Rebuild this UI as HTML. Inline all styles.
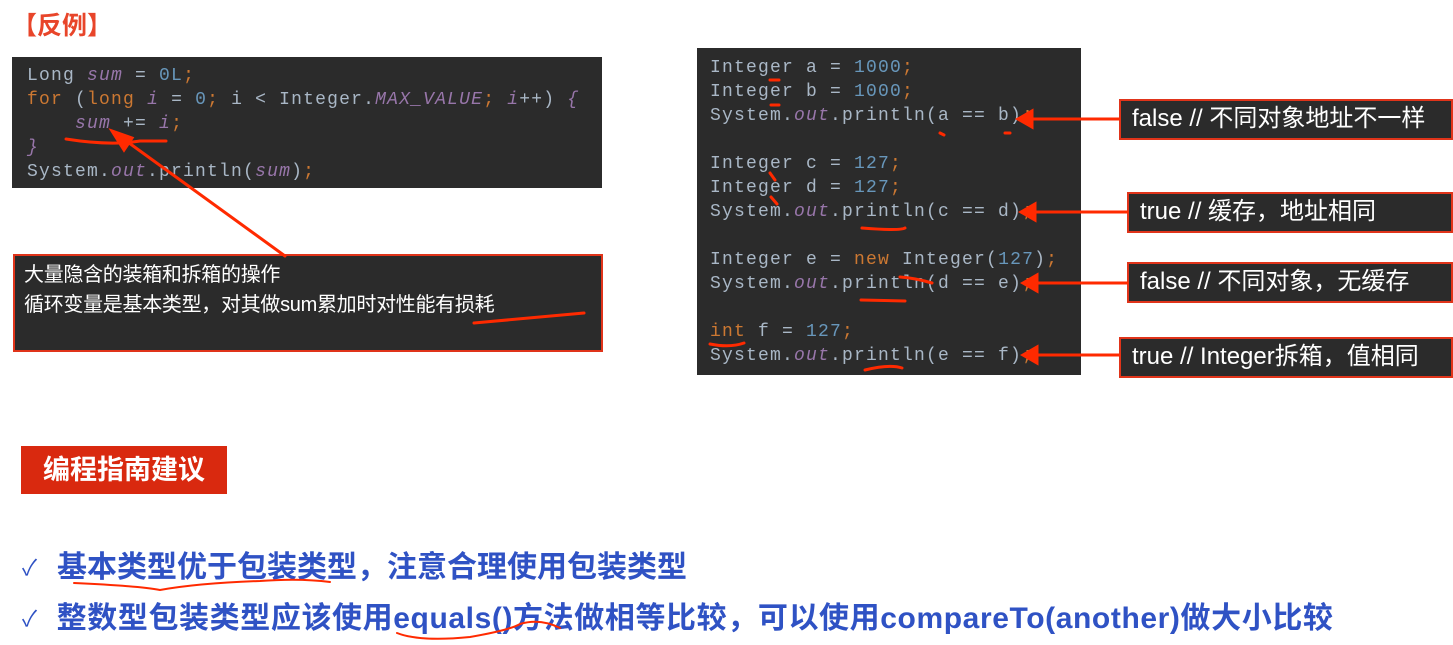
<!DOCTYPE html>
<html><head><meta charset="utf-8"><style>
body{margin:0;width:1453px;height:645px;background:#fff;position:relative;overflow:hidden;font-family:"Liberation Sans","Noto Sans CJK SC",sans-serif}
.a{position:absolute}
.code{background:#2b2b2b;font-family:"Liberation Mono",monospace;font-size:18px;letter-spacing:1.2px;color:#a9b7c6;line-height:24px;white-space:pre}
.k{color:#cc7832}.n{color:#6897bb}.i{color:#9876aa;font-style:italic}
.lab{background:#2b2b2b;border:2px solid #e0341a;color:#fff;font-size:24px;line-height:36px;padding-left:11px;box-sizing:border-box;white-space:nowrap}
.bul{color:#2f52c4;font-weight:bold;font-size:30px;white-space:nowrap;line-height:40px}
.ck{color:#2f52c4;font-weight:normal;font-size:22px;margin-right:20px;vertical-align:2px}
</style></head><body>
<div class="a" style="left:12px;top:6px;color:#e8452a;font-size:25px;font-weight:bold">【反例】</div>
<div class="a code" style="left:12px;top:57px;width:575px;height:119px;padding:7px 0 5px 15px">Long <span class="i">sum</span> = <span class="n">0L</span><span class="k">;</span>
<span class="k">for</span> (<span class="k">long</span> <span class="i">i</span> = <span class="n">0</span><span class="k">;</span> i &lt; Integer.<span class="i">MAX_VALUE</span><span class="k">;</span> <span class="i">i</span>++) <span class="i">{</span>
    <span class="i">sum</span> += <span class="i">i</span><span class="k">;</span>
<span class="i">}</span>
System.<span class="i">out</span>.println(<span class="i">sum</span>)<span class="k">;</span></div>
<div class="a" style="left:13px;top:254px;width:590px;height:98px;background:#2b2b2b;border:2px solid #e0341a;box-sizing:border-box;color:#fff;font-size:20px;line-height:30px;padding:4px 0 0 9px;letter-spacing:-0.3px">大量隐含的装箱和拆箱的操作<br>循环变量是基本类型，对其做sum累加时对性能有损耗</div>
<div class="a code" style="left:697px;top:48px;width:371px;height:315px;padding:8px 0 4px 13px">Integer a = <span class="n">1000</span><span class="k">;</span>
Integer b = <span class="n">1000</span><span class="k">;</span>
System.<span class="i">out</span>.println(a == b)<span class="k">;</span>

Integer c = <span class="n">127</span><span class="k">;</span>
Integer d = <span class="n">127</span><span class="k">;</span>
System.<span class="i">out</span>.println(c == d)<span class="k">;</span>

Integer e = <span class="k">new</span> Integer(<span class="n">127</span>)<span class="k">;</span>
System.<span class="i">out</span>.println(d == e)<span class="k">;</span>

<span class="k">int</span> f = <span class="n">127</span><span class="k">;</span>
System.<span class="i">out</span>.println(e == f)<span class="k">;</span></div>
<div class="a lab" style="left:1119px;top:99px;width:334px;height:41px">false // 不同对象地址不一样</div>
<div class="a lab" style="left:1127px;top:192px;width:326px;height:41px">true // 缓存，地址相同</div>
<div class="a lab" style="left:1127px;top:262px;width:326px;height:41px">false // 不同对象，无缓存</div>
<div class="a lab" style="left:1119px;top:337px;width:334px;height:41px">true // Integer拆箱，值相同</div>
<div class="a" style="left:21px;top:446px;width:206px;height:48px;background:#d9290f;color:#fff;font-weight:bold;font-size:27px;line-height:48px;text-align:center">编程指南建议</div>
<div class="a bul" style="left:22px;top:548px"><span class="ck">✓</span>基本类型优于包装类型，注意合理使用包装类型</div>
<div class="a bul" style="left:22px;top:599px;letter-spacing:0.6px"><span class="ck" style="margin-right:19px">✓</span>整数型包装类型应该使用equals()方法做相等比较，可以使用compareTo(another)做大小比较</div>
<svg class="a" style="left:0;top:0" width="1453" height="645" fill="none" stroke="#ff2a00" stroke-width="3" stroke-linecap="round">
<path d="M66 139 Q110 146 140 141 L166 141"/>
<path d="M285 256 L118 135"/><path d="M112 131 L124 150 L132 138 Z" fill="#ff2a00"/>
<path d="M474 323 Q530 318 584 313"/>
<path d="M770 80 L779 80"/><path d="M771 105 L779 105"/><path d="M940 133 L944 135"/><path d="M1005 133 L1010 133"/>
<path d="M770 173 L775 180"/><path d="M771 197 L777 204"/><path d="M862 228 Q900 231 905 228"/><path d="M861 300 L905 301"/>
<path d="M900 277 Q915 278 932 283"/><path d="M710 344 Q730 348 744 343"/><path d="M865 370 Q890 364 902 368"/>
<path d="M1119 119 L1025 119"/><path d="M1127 212 L1028 212"/><path d="M1127 283 L1030 283"/><path d="M1119 355 L1030 355"/>
<path d="M1018 119 L1032 111 L1032 127Z M1021 212 L1035 204 L1035 220Z M1023 283 L1037 275 L1037 291Z M1023 355 L1037 347 L1037 363Z" fill="#ff2a00"/>
<path d="M74 583 Q140 586 160 590 Q200 583 260 581 Q300 578 330 582" stroke-width="2"/>
<path d="M397 633 Q420 642 470 637 Q510 630 520 624 Q540 618 560 628" stroke-width="2"/>
</svg>
</body></html>
